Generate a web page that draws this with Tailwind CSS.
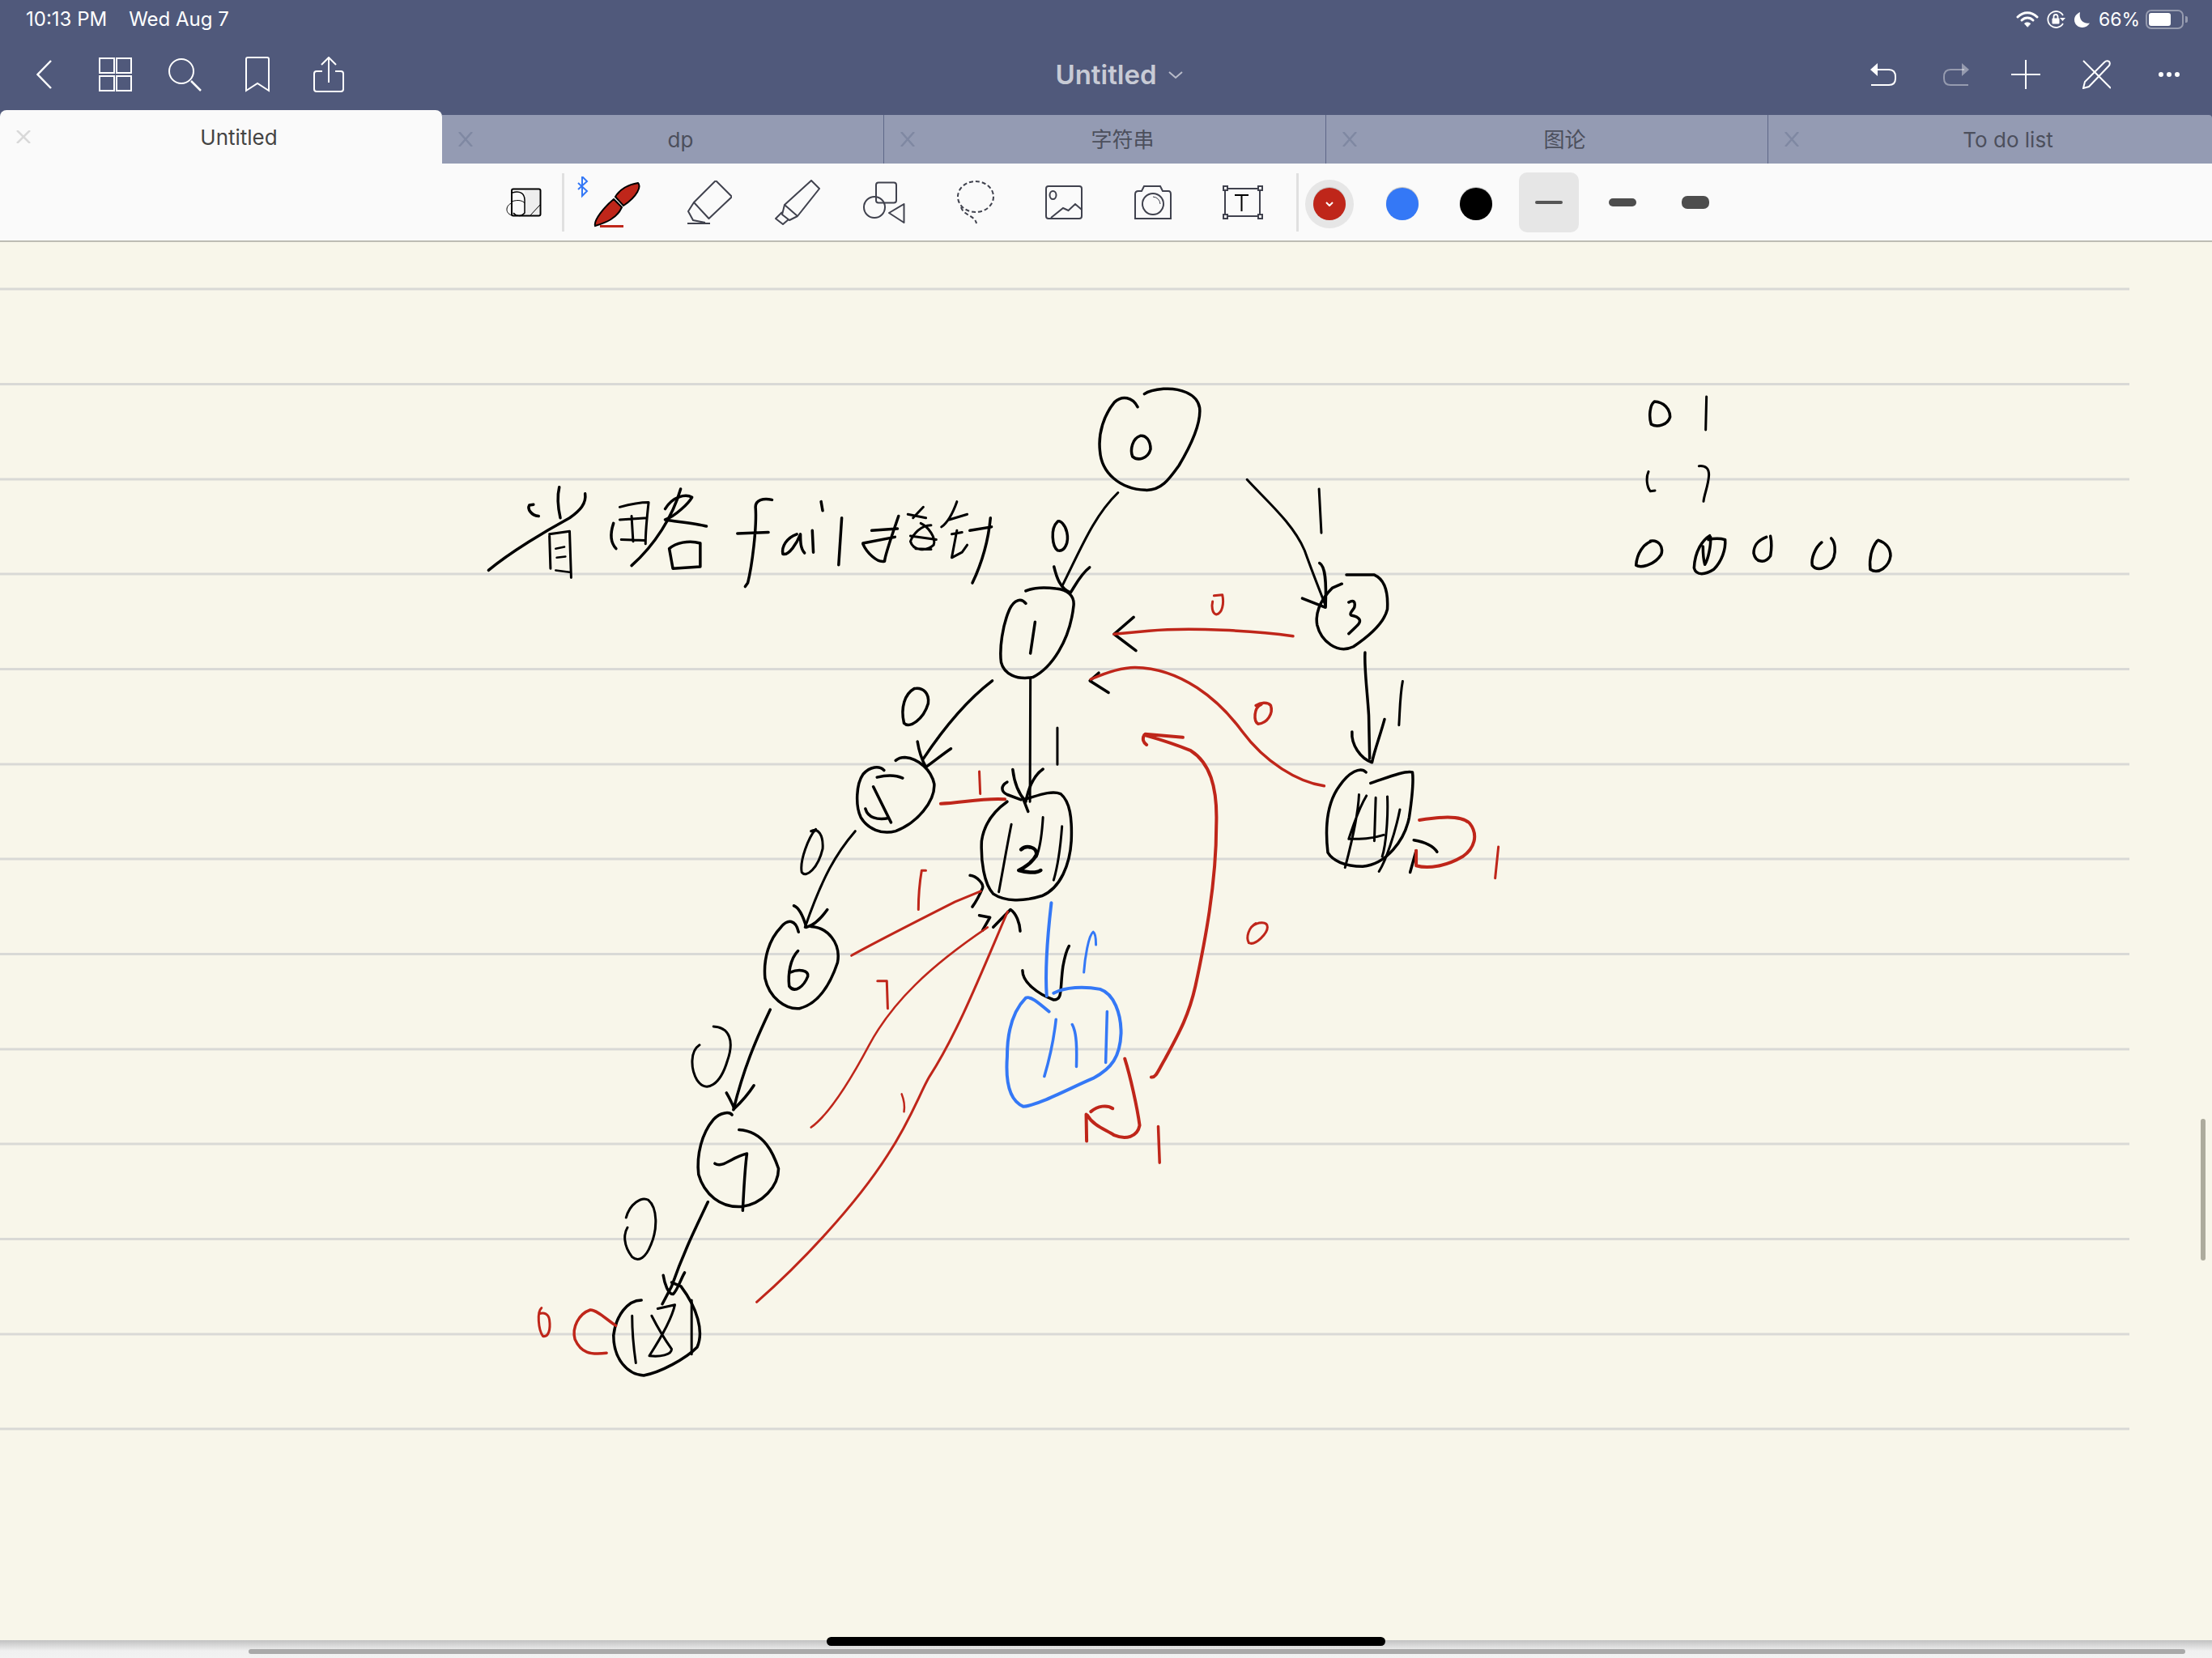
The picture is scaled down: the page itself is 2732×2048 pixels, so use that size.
<!DOCTYPE html>
<html lang="en">

<head>
  <meta charset="UTF-8" />
  <meta name="viewport" content="width=device-width, initial-scale=1.0" />
  <title>Untitled</title>
  <script src="https://cdn.jsdelivr.net/npm/@tailwindcss/browser@4"></script>
</head>

<body class="bg-[#50597b]">
  <div class="relative flex flex-col w-[2732px] h-[2048px] overflow-hidden font-['Inter','Noto_Sans_CJK_SC',sans-serif]">

    <!-- Status bar -->
    <div class="h-[48px] flex items-center justify-between pl-[32px] pr-[30px] text-white text-[24px] bg-[#50597b]">
      <div class="flex gap-[27px]"><span>10:13 PM</span><span>Wed Aug 7</span></div>
      <div class="flex items-center">
        <svg class="w-[28px] h-[20px]" viewBox="0 0 28 20" fill="none" stroke="white" stroke-width="3" stroke-linecap="round">
          <path d="M2 7C9 0 19 0 26 7" />
          <path d="M7 11C11 7 17 7 21 11" />
          <path d="M14 19L10.500 15C12 13.500 16 13.500 17.500 15Z" fill="white" stroke-width="1" />
        </svg>
        <svg class="ml-[10px] w-[24px] h-[22px]" viewBox="0 0 24 22" fill="none" stroke="white" stroke-width="1.800">
          <path d="M20 6A10 10 0 1 0 20 16" />
          <path d="M16 9L23 9L19.500 13Z" fill="white" stroke="none" />
          <rect x="6.500" y="9.500" width="9" height="7" rx="1" fill="white" stroke="none" />
          <path d="M8.500 10V7.500A2.500 2.500 0 0 1 13.500 7.500V10" />
        </svg>
        <svg class="ml-[10px] w-[19px] h-[20px]" viewBox="0 0 19 20" fill="white">
          <path d="M7 1C3 3 0 6 0 10.500C0 16 4.500 20 10 20C14 20 17 17.500 19 14.500C12 16 5 11 7 1Z" />
        </svg>
        <span class="ml-[11px] w-[50px] text-[23px] whitespace-nowrap">66%</span>
        <div class="ml-[8px] w-[47px] h-[24px] border-2 border-white/40 rounded-[7px] p-[2px]">
          <div class="w-[27px] h-[16px] bg-white rounded-[3px]"></div>
        </div>
        <div class="ml-[2px] w-[3px] h-[8px] bg-white/40 rounded-r-[2px]"></div>
      </div>
    </div>

    <!-- Nav bar -->
    <div class="h-[88px] grid grid-cols-[1fr_auto_1fr] items-center bg-[#50597b]">
      <div class="flex items-center pl-[45px]">
        <svg class="w-[19px] h-[38px]" viewBox="0 0 19 38" fill="none" stroke="white" stroke-width="2.500">
          <path d="M18 2L1.500 19L18 36" />
        </svg>
        <svg class="ml-[58px] w-[41px] h-[42px]" viewBox="0 0 41 42" fill="none" stroke="white" stroke-width="2">
          <rect x="1" y="1" width="18" height="18" />
          <rect x="22" y="1" width="18" height="18" />
          <rect x="1" y="23" width="18" height="18" />
          <rect x="22" y="23" width="18" height="18" />
        </svg>
        <svg class="ml-[45px] w-[41px] h-[41px]" viewBox="0 0 41 41" fill="none" stroke="white" stroke-width="2">
          <circle cx="16" cy="16" r="15" />
          <path d="M28 28L40 40" stroke-width="2.500" />
        </svg>
        <svg class="ml-[54px] w-[30px] h-[44px]" viewBox="0 0 30 44" fill="none" stroke="white" stroke-width="2">
          <path d="M1 42V3Q1 1 3 1H27Q29 1 29 3V42L15 33Z" />
        </svg>
        <svg class="ml-[54px] w-[38px] h-[44px]" viewBox="0 0 38 44" fill="none" stroke="white" stroke-width="2">
          <path d="M19 32V2M10 10L19 1L28 10" />
          <path d="M11 18H4Q1 18 1 21V40Q1 43 4 43H34Q37 43 37 40V21Q37 18 34 18H27" />
        </svg>
      </div>
      <div class="flex items-center gap-[14px] pl-[32px] pt-[2px] text-[33px] font-semibold text-white/70">
        <span>Untitled</span>
        <svg class="w-[18px] h-[10px]" viewBox="0 0 18 10" fill="none" stroke="white" stroke-opacity="0.6" stroke-width="2">
          <path d="M1 1L9 8L17 1" />
        </svg>
      </div>
      <div class="flex items-center justify-end pr-[40px]">
        <svg class="w-[32px] h-[30px]" viewBox="0 0 32 30" fill="none" stroke="white" stroke-width="2">
          <path d="M6 9H23Q31 9 31 18V20Q31 28 23 28H1" />
          <path d="M0 9L9 1V17Z" fill="white" stroke="none" />
        </svg>
        <svg class="ml-[58px] w-[32px] h-[30px]" viewBox="0 0 32 30" fill="none" stroke="white" stroke-opacity="0.4" stroke-width="2">
          <path d="M26 9H9Q1 9 1 18V20Q1 28 9 28H31" />
          <path d="M32 9L23 1V17Z" fill="white" fill-opacity="0.4" stroke="none" />
        </svg>
        <svg class="ml-[52px] w-[36px] h-[36px]" viewBox="0 0 36 36" fill="none" stroke="white" stroke-width="2">
          <path d="M18 0V36M0 18H36" />
        </svg>
        <svg class="ml-[52px] w-[35px] h-[36px]" viewBox="0 0 35 36" fill="none" stroke="white" stroke-width="2">
          <path d="M1 1L35 35" />
          <path d="M1 35L3 27L27 3Q30 0 33 2Q35 5 32 8L8 33Z" />
        </svg>
        <div class="ml-[59px] w-[26px] flex justify-between">
          <div class="w-[6px] h-[6px] rounded-full bg-white"></div>
          <div class="w-[6px] h-[6px] rounded-full bg-white"></div>
          <div class="w-[6px] h-[6px] rounded-full bg-white"></div>
        </div>
      </div>
    </div>

    <!-- Tabs -->
    <div class="h-[66px] flex items-end bg-[#50597b] text-[26px]">
      <div class="relative w-[546px] h-[66px] flex items-center justify-center pl-[44px] bg-[#fafafa] text-[#444444] rounded-t-[8px]">
        <svg class="absolute left-[20px] top-[25px] w-[18px] h-[16px]" viewBox="0 0 18 16" stroke="#d9d9d9" stroke-width="2.500"><path d="M1 0L17 16M17 0L1 16" /></svg>
        Untitled
      </div>
      <div class="relative w-[546px] h-[60px] flex items-center justify-center pl-[44px] bg-[#949bb3] text-[#4c4f5c] border-r border-[#5e6788]">
        <svg class="absolute left-[20px] top-[21px] w-[18px] h-[18px]" viewBox="0 0 18 18" stroke="#7f88a2" stroke-width="2.500"><path d="M1 0L17 18M17 0L1 18" /></svg>
        dp
      </div>
      <div class="relative w-[546px] h-[60px] flex items-center justify-center pl-[44px] bg-[#949bb3] text-[#4c4f5c] border-r border-[#5e6788]">
        <svg class="absolute left-[20px] top-[21px] w-[18px] h-[18px]" viewBox="0 0 18 18" stroke="#7f88a2" stroke-width="2.500"><path d="M1 0L17 18M17 0L1 18" /></svg>
        字符串
      </div>
      <div class="relative w-[546px] h-[60px] flex items-center justify-center pl-[44px] bg-[#949bb3] text-[#4c4f5c] border-r border-[#5e6788]">
        <svg class="absolute left-[20px] top-[21px] w-[18px] h-[18px]" viewBox="0 0 18 18" stroke="#7f88a2" stroke-width="2.500"><path d="M1 0L17 18M17 0L1 18" /></svg>
        图论
      </div>
      <div class="relative w-[548px] h-[60px] flex items-center justify-center pl-[44px] bg-[#949bb3] text-[#4c4f5c] rounded-tr-[4px]">
        <svg class="absolute left-[20px] top-[21px] w-[18px] h-[18px]" viewBox="0 0 18 18" stroke="#7f88a2" stroke-width="2.500"><path d="M1 0L17 18M17 0L1 18" /></svg>
        To do list
      </div>
    </div>

    <!-- Toolbar -->
    <div class="h-[97px] flex items-center pl-[624px] pt-[1px] bg-[#fafafa] border-b-2 border-[#bdbcb4]">
      <svg class="w-[46px] h-[36px]" viewBox="624 231 46 36" fill="none" stroke="black">
        <rect x="648" y="234" width="18" height="30" fill="#eeeeee" stroke="none" />
        <rect x="632" y="232.500" width="35.500" height="33" rx="2" stroke-width="2" />
        <path d="M633 237C642 234 648 238 648 246V262C644 267 637 266 634 262" stroke-width="1.500" />
        <path d="M632 248C640 245 646 247 648 250M632 250C625 252 623 262 632 265" stroke-width="1" />
        <path d="M655 265L667 252" stroke-width="1" />
      </svg>
      <div class="ml-[24px] w-[3px] h-[72px] bg-[#e0e0e0]"></div>
      <svg class="ml-[16px] w-[78px] h-[64px]" viewBox="713 216 78 64" fill="none">
        <path d="M714 224L725 234L719 240V216L725 222L714 232" stroke="#3478f6" stroke-width="2" />
        <path d="M760 241C765 232 776 226 788 224C792 228 788 240 770 252Z" fill="#bf261a" stroke="black" stroke-width="2" />
        <path d="M758 244L768 254C762 268 748 273 735 277C733 270 746 254 758 244Z" fill="#bf261a" stroke="black" stroke-width="2" />
        <path d="M741 277.500H770" stroke="#bf261a" stroke-width="3" />
      </svg>
      <svg class="ml-[58px] w-[55px] h-[54px]" viewBox="849 225 55 54" fill="none" stroke="#40424e" stroke-width="2">
        <path d="M884 225L904 245L875.500 272L857 252Z" stroke-linejoin="round" />
        <path d="M857 252L850 263L856 274L871 277" />
        <path d="M849 278H877" />
      </svg>
      <svg class="ml-[53px] w-[56px] h-[56px]" viewBox="957 222 56 56" fill="none" stroke="#40424e" stroke-width="2" stroke-linejoin="round">
        <path d="M1002 223L1012 233L985 267L969 253Z" />
        <path d="M969 253L966 265L975 272L985 267" />
        <path d="M966 262L958 270L967 277L974 271" />
      </svg>
      <svg class="ml-[53px] w-[52px] h-[52px]" viewBox="1066 226 52 52" fill="none" stroke="#40424e" stroke-width="2">
        <rect x="1082" y="227.500" width="25" height="25" rx="3" />
        <circle cx="1080" cy="258" r="13" />
        <path d="M1116.500 254L1098 265L1116.500 277Z" stroke-linejoin="round" />
      </svg>
      <svg class="ml-[63px] w-[48px] h-[54px]" viewBox="1181 225 48 54" fill="none" stroke="#40424e" stroke-width="2" stroke-dasharray="5 3">
        <ellipse cx="1205" cy="245" rx="22" ry="19" />
        <path d="M1187 258C1190 268 1204 268 1206 278" />
      </svg>
      <svg class="ml-[62px] w-[46px] h-[42px]" viewBox="1292 232 46 42" fill="none" stroke="#40424e" stroke-width="2">
        <rect x="1293" y="233" width="44" height="40" rx="3" />
        <ellipse cx="1301.500" cy="244" rx="4" ry="5" />
        <path d="M1299 272L1314 260L1320.500 263L1329 255L1337 262" />
      </svg>
      <svg class="ml-[64px] w-[47px] h-[44px]" viewBox="1402 230 47 44" fill="none" stroke="#40424e" stroke-width="2">
        <path d="M1403 272V242Q1403 238 1407 238H1411L1414 232H1434L1437 238H1444Q1447 238 1447 242V272Z" />
        <circle cx="1425" cy="254" r="13" />
        <path d="M1425 245Q1433 246 1434 254" stroke-width="1" />
      </svg>
      <svg class="ml-[62px] w-[50px] h-[42px]" viewBox="1511 232 50 42" fill="none" stroke="#40424e" stroke-width="2">
        <rect x="1514" y="236" width="43" height="34" />
        <rect x="1512" y="233" width="5" height="5" fill="#fafafa" />
        <rect x="1555" y="233" width="5" height="5" fill="#fafafa" />
        <rect x="1512" y="268" width="5" height="5" fill="#fafafa" />
        <rect x="1555" y="268" width="5" height="5" fill="#fafafa" />
        <path d="M1526 244H1543M1534.500 244V264" stroke="black" />
      </svg>
      <div class="ml-[41px] w-[3px] h-[72px] bg-[#e0e0e0]"></div>
      <div class="ml-[8px] mt-[3px] w-[60px] h-[60px] rounded-full bg-[#e6e6e6] flex items-center justify-center">
        <div class="w-[40px] h-[40px] rounded-full bg-[#bf261a] shadow-[0_-1px_1px_#bbbbbb] flex items-center justify-center">
          <svg class="w-[10px] h-[6px]" viewBox="0 0 10 6" fill="none" stroke="white" stroke-width="2"><path d="M1 1L5 5L9 1" /></svg>
        </div>
      </div>
      <div class="ml-[40px] mt-[3px] w-[40px] h-[40px] rounded-full bg-[#3478f6] shadow-[0_-1px_1px_#bbbbbb]"></div>
      <div class="ml-[51px] mt-[3px] w-[40px] h-[40px] rounded-full bg-black shadow-[0_-1px_1px_#bbbbbb]"></div>
      <div class="ml-[33px] w-[74px] h-[74px] rounded-[10px] bg-[#e6e6e6] flex items-center justify-center">
        <div class="w-[34px] h-[4px] rounded-full bg-[#555555]"></div>
      </div>
      <div class="ml-[37px] w-[34px] h-[10px] rounded-full bg-[#4d4d4d]"></div>
      <div class="ml-[56px] w-[34px] h-[16px] rounded-[7px] bg-[#4d4d4d]"></div>
    </div>

    <!-- Notebook page, ink is drawn in page coordinates -->
    <div class="relative h-[1727px] bg-[#f8f6ea]">
      <svg class="absolute inset-0 w-[2732px] h-[1727px] [&_path]:[vector-effect:non-scaling-stroke]" viewBox="0 299 2732 1727" fill="none" stroke-linecap="round" stroke-linejoin="round">
        <path stroke="#d9d9d6" stroke-width="3" stroke-linecap="butt" d="M0 357H2630M0 474.500H2630M0 592H2630M0 709H2630M0 826.500H2630M0 944H2630M0 1061H2630M0 1178.500H2630M0 1296H2630M0 1413H2630M0 1530.500H2630M0 1648H2630M0 1765H2630" />

        <!-- title and root node -->
        <g transform="translate(560 450) scale(0.6378 0.4464)" stroke="black" stroke-width="3.500">
          <path d="M68 570C110 520 180 460 225 425C245 405 258 385 255 358" />
          <path d="M205 340C200 370 203 400 207 425" />
          <path d="M165 420C150 418 143 400 147 390L155 388" />
          <path d="M186 475L188 565M186 470L225 462L228 590" stroke-width="3" />
          <path d="M198 510L215 505M200 535L217 532M198 570L225 575" stroke-width="2.500" />
          <path d="M310 440C303 470 305 495 315 510" />
          <path d="M322 395C340 388 365 382 378 382C375 420 372 465 372 497M345 420L348 490M325 485L370 487M322 430L375 425" stroke-width="3" />
          <path d="M345 557C390 500 425 420 440 345" />
          <path d="M410 400C425 365 450 358 462 368C455 385 430 420 410 430C430 435 470 440 490 448" />
          <path d="M418 510L425 565L478 560L478 495C455 485 430 495 418 510" />
          <path d="M617 375C600 370 585 375 585 395C588 450 578 560 570 605L565 615M550 468L610 465" />
          <path d="M665 470C645 480 635 505 638 525C650 530 665 495 672 470C672 490 672 510 680 522" />
          <path d="M712 380L715 405M695 460L697 520" />
          <path d="M752 425L746 555" />
          <path d="M862 420C850 470 835 530 835 545C820 550 800 520 793 497M810 460L860 455M793 495L855 478" />
          <path d="M890 425L910 395M880 415L915 425M905 440C920 450 935 480 930 500C915 520 890 515 885 490C890 470 905 445 925 445M885 475L935 485M895 510L925 512" stroke-width="3" />
          <path d="M975 380C965 420 955 440 945 450M960 430L995 415M965 470L985 465M975 460L965 535L985 520L995 500" stroke-width="3" />
          <path d="M1040 425C1035 500 1020 560 1005 605M1000 460L1042 450" />

          <path d="M1325 118C1315 90 1295 85 1280 105C1260 140 1248 190 1252 240C1255 300 1290 345 1340 348C1370 350 1385 320 1405 280C1430 220 1448 160 1445 120C1440 80 1405 65 1375 68C1360 70 1345 75 1338 82" />
          <path d="M1330 198C1315 205 1310 235 1315 255C1325 268 1345 262 1350 235C1350 210 1340 195 1330 198" />
          <path d="M1287 355C1240 420 1215 510 1180 610" stroke-width="3" />
          <path d="M1163 560C1168 590 1175 620 1195 632C1205 610 1215 580 1232 562" />
          <path d="M1170 435C1155 455 1160 505 1170 515C1185 520 1192 490 1188 465C1185 445 1175 430 1170 435" />
        </g>

        <!-- middle of the tree -->
        <g transform="translate(1000 680) scale(0.574 0.4847)" stroke-width="3.500">
          <g stroke="black">
            <path d="M465 135C455 120 440 125 430 150C415 190 408 250 412 285C418 315 445 330 480 323C520 300 560 230 568 140C570 115 555 100 530 97C505 93 480 95 465 103" />
            <path d="M485 182L475 262" />
            <path d="M475 325L474 640M533 452V545" stroke-width="3" />
            <path d="M437 558C440 590 450 620 465 640C470 610 480 575 502 557" />
            <path d="M425 590C410 600 412 615 425 622L455 635" />
            <path d="M393 332C340 380 290 450 245 530" />
            <path d="M232 487C235 510 240 530 250 552C265 540 285 520 304 505" />
            <path d="M225 352C205 365 195 400 203 440C215 455 245 430 255 390C258 365 245 348 225 352" />
            <path d="M160 560C150 548 130 550 115 570C100 595 98 650 110 680C125 710 155 725 185 715C230 695 270 640 268 595C262 560 235 530 205 527C195 527 190 530 185 535" />
            <path d="M145 578C165 572 185 572 200 580M137 602L175 693M120 658C125 680 145 688 170 682" />
            <path d="M470 665C465 650 462 640 460 635C490 625 520 610 540 620C560 640 565 680 563 740C560 800 540 860 500 880C460 895 420 895 395 875C375 850 368 790 370 740C375 700 395 665 425 640" />
            <path d="M434 698C425 750 415 820 407 870M502 680C500 720 495 760 488 780M543 703C540 750 535 800 525 840" stroke-width="3" />
            <path d="M455 762C465 750 490 755 488 775C480 795 460 810 450 815C470 822 490 822 497 815" stroke-width="4.500" />
            <path d="M345 828C360 830 375 850 372 860C365 880 358 895 350 908" />
            <path d="M365 930L388 935L372 968M395 960L432 915C445 925 452 950 453 970" />
            <path d="M458 1070C458 1100 490 1130 525 1145C545 1145 538 1120 545 1060C548 1040 552 1020 558 1008" />

            <path d="M941 -181C980 -130 1040 -70 1065 0C1080 50 1100 110 1110 140" stroke-width="3" />
            <path d="M1096 -157L1101 -45" stroke-width="3" />
            <path d="M1097 32C1110 40 1112 80 1110 145L1060 122" />
            <path d="M1155 62H1215C1240 75 1245 110 1243 150C1235 190 1195 225 1170 245C1135 265 1100 230 1092 190C1088 165 1095 130 1125 95L1145 85" />
            <path d="M1160 132C1170 125 1175 130 1172 145C1168 155 1160 160 1165 165C1185 170 1190 180 1175 195L1160 212" />
            <path d="M1195 260C1193 300 1200 360 1203 420L1205 530" />
            <path d="M1167 462C1165 495 1185 530 1210 540C1215 510 1228 470 1237 430" />
            <path d="M1276 333C1270 370 1270 410 1268 445" stroke-width="3" />
            <path d="M1197 565C1185 550 1160 565 1140 600C1115 640 1108 700 1115 770C1125 790 1150 805 1190 805C1240 800 1280 740 1290 680C1295 640 1300 590 1297 565C1280 560 1240 580 1207 593" />
            <path d="M1182 622C1180 680 1165 750 1152 808M1198 625C1180 660 1170 700 1160 735C1185 735 1210 735 1235 725M1218 630L1215 740M1243 627C1245 680 1240 750 1232 780M1270 660C1260 720 1240 790 1225 818" stroke-width="3" />
            <path d="M1300 738C1320 742 1340 750 1350 768M1305 765L1292 820" />
            <path d="M622 312L603 332L643 362" />
            <path d="M697 170L655 213L702 255" />
          </g>
          <g stroke="#bf261a">
            <path d="M282 645C320 645 370 630 420 634" stroke-width="4" />
            <path d="M365 563L367 620" stroke-width="3" />
            <path d="M678 1295C690 1340 705 1420 710 1465C705 1495 680 1502 655 1490C635 1475 610 1465 598 1440M595 1437L596 1505M605 1430C620 1415 640 1412 652 1422" stroke-width="4" />
            <path d="M750 1468L753 1560" />
            <path d="M735 1342C745 1345 750 1325 765 1295C790 1240 815 1190 830 1110C850 1000 875 850 875 700C878 600 860 540 820 510C790 495 750 480 720 470C715 480 718 490 725 495M722 468L803 476" stroke-width="4" />
            <path d="M960 950C945 960 938 985 945 1000C960 1008 985 975 985 960C985 945 965 945 950 960" stroke-width="3" />
            <path d="M1107 600C1050 590 980 540 930 460C880 380 800 300 700 298C670 298 630 315 605 328" stroke-width="3.500" />
            <path d="M1040 218C960 205 820 195 730 205L655 213" stroke-width="3.500" />
            <path d="M870 115L888 113C892 135 888 160 875 163C865 160 865 140 867 130" stroke-width="3" />
            <path d="M972 392C955 400 955 435 965 442C985 440 998 415 992 395C985 385 970 388 960 395" />
            <path d="M1312 687C1350 680 1400 672 1420 695C1440 725 1430 760 1405 780C1370 805 1330 812 1305 803V765" stroke-width="4" />
            <path d="M1482 755L1475 835" stroke-width="3" />
          </g>
          <g stroke="#3478f6">
            <path d="M520 898C515 950 505 1050 510 1135" stroke-width="4" />
            <path d="M590 1075C592 1040 600 980 610 972C615 975 616 990 616 1005" stroke-width="3" />
            <path d="M515 1175C490 1150 475 1135 465 1140C440 1170 425 1220 425 1290C422 1340 425 1400 460 1417C490 1415 560 1370 610 1345C650 1320 668 1290 670 1230C670 1180 655 1130 625 1118C590 1110 550 1112 525 1128" stroke-width="4" />
            <path d="M530 1195C525 1250 515 1300 505 1340M565 1208C575 1230 575 1270 574 1315M640 1175L637 1305" stroke-width="3.500" />
          </g>
        </g>

        <!-- lower left of the tree -->
        <g transform="translate(620 1000) scale(0.574 0.4847)" stroke-width="3.500">
          <g stroke="black">
            <path d="M760 55C720 110 690 170 652 300" stroke-width="3" />
            <path d="M628 245C640 250 650 280 655 300C670 295 685 280 700 255" />
            <path d="M675 50C660 70 640 130 645 160C655 175 680 150 690 100C692 65 680 45 665 55" stroke-width="3" />
            <path d="M638 312C632 280 615 278 600 300C575 330 562 380 566 430C575 480 610 510 640 507C680 495 705 450 722 390C730 340 700 300 665 298" />
            <path d="M637 360C620 380 615 420 618 450C630 470 650 450 658 425C660 410 640 405 620 415" />
            <path d="M577 510C545 590 520 660 498 765" />
            <path d="M483 722C490 735 495 750 500 762C515 745 530 725 542 703" />
            <path d="M425 600C405 615 405 660 420 690C440 725 470 700 485 640C500 590 490 555 455 553" stroke-width="3" />
            <path d="M495 778C490 770 470 770 455 790C430 825 418 880 423 930C435 980 470 1015 515 1012C560 1005 595 960 595 915C585 880 565 820 510 816" />
            <path d="M458 902C475 915 495 885 527 877C522 920 520 980 518 1022" />
            <path d="M443 1000C415 1070 390 1130 365 1215L345 1260" />
            <path d="M347 1187C350 1210 358 1235 368 1235C378 1225 385 1195 393 1180" />
            <path d="M267 1040C275 1005 300 985 315 995C335 1015 335 1070 320 1110C310 1140 295 1155 280 1140C260 1110 262 1080 270 1065" stroke-width="3" />
            <path d="M300 1250C270 1250 245 1290 240 1340C240 1400 270 1440 305 1442C340 1435 395 1400 420 1370C435 1330 420 1270 385 1215L365 1205" />
            <path d="M280 1290C280 1330 283 1370 288 1410M322 1290C335 1320 350 1350 365 1375C365 1390 340 1395 317 1392C340 1350 365 1300 372 1262L335 1272M408 1250V1388" stroke-width="3" />
          </g>
          <g stroke="#bf261a">
            <path d="M752 372C800 340 900 280 975 235L1030 208" stroke-width="3" />
            <path d="M912 155H903C898 190 896 225 896 255" stroke-width="3" />
            <path d="M665 810C700 780 745 700 790 600C840 490 920 400 1045 300" stroke-width="2.500" />
            <path d="M548 1255C640 1160 760 1010 830 880C880 790 900 720 920 680C980 570 1030 420 1088 260" stroke-width="3" />
            <path d="M808 437H828L830 507" stroke-width="3" />
            <path d="M860 725C865 740 867 755 865 770" stroke-width="2.500" />
            <path d="M245 1315C225 1300 205 1275 190 1275C165 1285 150 1320 157 1350C170 1385 190 1390 225 1385" />
            <path d="M85 1270C75 1280 78 1325 88 1342C100 1345 105 1325 102 1300C100 1285 90 1280 80 1285" stroke-width="3" />
          </g>
        </g>

        <!-- transition table -->
        <g transform="translate(1960 450) scale(0.3333)" stroke="black" stroke-width="3.500">
          <path d="M248 140C235 150 228 190 238 222C260 235 300 225 308 195C308 165 285 140 250 138" />
          <path d="M443 120L440 243" stroke-width="3" />
          <path d="M228 398C218 420 222 455 235 470L252 468" stroke-width="3" />
          <path d="M415 377C440 375 452 385 452 410C450 450 435 480 432 508" stroke-width="3" />
          <path d="M240 655C210 665 185 700 182 745C200 755 250 745 275 705C285 675 265 650 235 655" />
          <path d="M455 635C430 650 400 690 397 755C405 785 440 780 470 760C500 730 515 685 512 650C495 645 470 645 450 650M430 675C430 700 432 725 437 742C450 720 460 670 458 640" />
          <path d="M665 640C640 650 618 665 618 700C625 735 660 740 680 710C685 680 683 650 680 637" />
          <path d="M870 660C845 680 830 720 835 745C855 770 900 755 915 715C922 690 920 660 905 645" />
          <path d="M1075 655C1055 680 1045 720 1050 760C1080 780 1120 750 1125 710C1125 680 1105 660 1080 652" />
        </g>
      </svg>
      <!-- vertical scroll thumb -->
      <div class="absolute left-[2718px] top-[1083px] w-[6px] h-[175px] rounded-full bg-[#adab9d]"></div>
    </div>

    <!-- Bottom scroll strip -->
    <div class="h-[22px] pt-[11px] pl-[307px] bg-linear-to-b from-[#c2c2c2] via-[#f0f0f0] via-60% to-[#f2f2f2]">
      <div class="w-[2392px] h-[6px] rounded-full bg-[#a9a9a9]"></div>
    </div>

    <!-- Home indicator -->
    <div class="absolute left-[1021px] top-[2022px] w-[690px] h-[11px] rounded-full bg-black"></div>
  </div>
</body>

</html>
